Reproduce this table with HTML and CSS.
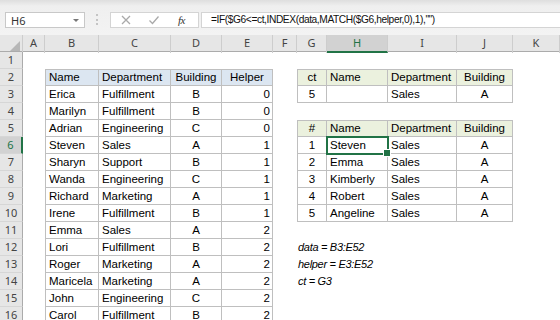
FILE: index.html
```html
<!DOCTYPE html>
<html>
<head>
<meta charset="utf-8">
<link rel="stylesheet" href="styles.css">
</head>
<body>
<div class="fbar">
  <div class="namebox"><span class="nb-text">H6</span><span class="nb-arrow"></span></div>
  <span class="grip"></span>
  <div class="btns">
    <svg class="ico" width="12" height="12" viewBox="0 0 12 12"><path d="M2 2 L10 10 M10 2 L2 10" stroke="#a9a9a9" stroke-width="1.3" fill="none"/></svg>
    <svg class="ico" width="12" height="12" viewBox="0 0 12 12"><path d="M1.5 6.5 L4.5 9.5 L10.5 2.5" stroke="#a9a9a9" stroke-width="1.3" fill="none"/></svg>
    <span class="fx">fx</span>
  </div>
  <div class="formula">=IF($G6&lt;=ct,INDEX(data,MATCH($G6,helper,0),1),"")</div>
</div>
<div class="sheet">
  <div class="r hdr">
    <span class="corner"><i class="tri"></i></span>
    <span class="ch">A</span><span class="ch">B</span><span class="ch">C</span><span class="ch">D</span><span class="ch">E</span><span class="ch">F</span><span class="ch">G</span><span class="ch on">H</span><span class="ch">I</span><span class="ch">J</span><span class="ch">K</span>
  </div>
  <div class="r"><span class="rh">1</span><span></span><span></span><span></span><span></span><span></span><span></span><span></span><span></span><span></span><span></span><span></span></div>
  <div class="r"><span class="rh">2</span><span></span><span class="t tl tt hb">Name</span><span class="t tt hb">Department</span><span class="t tt hb ctr">Building</span><span class="t tt hb ctr">Helper</span><span></span><span class="t tl tt hg ctr">ct</span><span class="t tt hg">Name</span><span class="t tt hg">Department</span><span class="t tt hg ctr">Building</span><span></span></div>
  <div class="r"><span class="rh">3</span><span></span><span class="t tl">Erica</span><span class="t">Fulfillment</span><span class="t ctr">B</span><span class="t rt">0</span><span></span><span class="t tl ctr">5</span><span class="t"></span><span class="t">Sales</span><span class="t ctr">A</span><span></span></div>
  <div class="r"><span class="rh">4</span><span></span><span class="t tl">Marilyn</span><span class="t">Fulfillment</span><span class="t ctr">B</span><span class="t rt">0</span><span></span><span></span><span></span><span></span><span></span><span></span></div>
  <div class="r"><span class="rh">5</span><span></span><span class="t tl">Adrian</span><span class="t">Engineering</span><span class="t ctr">C</span><span class="t rt">0</span><span></span><span class="t tl tt hg ctr">#</span><span class="t tt hg">Name</span><span class="t tt hg">Department</span><span class="t tt hg ctr">Building</span><span></span></div>
  <div class="r"><span class="rh on">6</span><span></span><span class="t tl">Steven</span><span class="t">Sales</span><span class="t ctr">A</span><span class="t rt">1</span><span></span><span class="t tl ctr">1</span><span class="t sel">Steven</span><span class="t">Sales</span><span class="t ctr">A</span><span></span></div>
  <div class="r"><span class="rh">7</span><span></span><span class="t tl">Sharyn</span><span class="t">Support</span><span class="t ctr">B</span><span class="t rt">1</span><span></span><span class="t tl ctr">2</span><span class="t">Emma</span><span class="t">Sales</span><span class="t ctr">A</span><span></span></div>
  <div class="r"><span class="rh">8</span><span></span><span class="t tl">Wanda</span><span class="t">Engineering</span><span class="t ctr">C</span><span class="t rt">1</span><span></span><span class="t tl ctr">3</span><span class="t">Kimberly</span><span class="t">Sales</span><span class="t ctr">A</span><span></span></div>
  <div class="r"><span class="rh">9</span><span></span><span class="t tl">Richard</span><span class="t">Marketing</span><span class="t ctr">A</span><span class="t rt">1</span><span></span><span class="t tl ctr">4</span><span class="t">Robert</span><span class="t">Sales</span><span class="t ctr">A</span><span></span></div>
  <div class="r"><span class="rh">10</span><span></span><span class="t tl">Irene</span><span class="t">Fulfillment</span><span class="t ctr">B</span><span class="t rt">1</span><span></span><span class="t tl ctr">5</span><span class="t">Angeline</span><span class="t">Sales</span><span class="t ctr">A</span><span></span></div>
  <div class="r"><span class="rh">11</span><span></span><span class="t tl">Emma</span><span class="t">Sales</span><span class="t ctr">A</span><span class="t rt">2</span><span></span><span></span><span></span><span></span><span></span><span></span></div>
  <div class="r"><span class="rh">12</span><span></span><span class="t tl">Lori</span><span class="t">Fulfillment</span><span class="t ctr">B</span><span class="t rt">2</span><span></span><span class="note">data = B3:E52</span><span></span><span></span><span></span><span></span></div>
  <div class="r"><span class="rh">13</span><span></span><span class="t tl">Roger</span><span class="t">Marketing</span><span class="t ctr">A</span><span class="t rt">2</span><span></span><span class="note">helper = E3:E52</span><span></span><span></span><span></span><span></span></div>
  <div class="r"><span class="rh">14</span><span></span><span class="t tl">Maricela</span><span class="t">Marketing</span><span class="t ctr">A</span><span class="t rt">2</span><span></span><span class="note">ct = G3</span><span></span><span></span><span></span><span></span></div>
  <div class="r"><span class="rh">15</span><span></span><span class="t tl">John</span><span class="t">Engineering</span><span class="t ctr">C</span><span class="t rt">2</span><span></span><span></span><span></span><span></span><span></span><span></span></div>
  <div class="r"><span class="rh">16</span><span></span><span class="t tl">Carol</span><span class="t">Fulfillment</span><span class="t ctr">B</span><span class="t rt">2</span><span></span><span></span><span></span><span></span><span></span><span></span></div>
</div>
</body>
</html>
```
FILE: styles.css
```css
* { box-sizing: border-box; margin: 0; padding: 0; }
html, body { width: 560px; height: 320px; overflow: hidden; }
body { background: #fff; font-family: "Liberation Sans", Arial, sans-serif; color: #000; }

.fbar {
  height: 35px;
  background: linear-gradient(#dedede 0, #efefef 6px, #f3f3f3 100%);
  display: flex;
  align-items: flex-start;
  padding: 12px 0 0 5px;
}
.namebox {
  width: 80px; height: 16px;
  background: #fff; border: 1px solid #c8c8c8;
  display: flex; align-items: center; justify-content: space-between;
  padding: 0 5px 0 5px;
  font: 11px "Noto Sans", sans-serif; color: #333;
}
.nb-arrow {
  width: 0; height: 0;
  border-left: 3px solid transparent; border-right: 3px solid transparent;
  border-top: 3px solid #777;
}
.grip {
  margin: 2px 0 0 11px;
  width: 2px; height: 11px;
  border-left: 2px dotted #c4c4c4;
}
.btns {
  margin-left: 12px;
  width: 89px; height: 16px;
  background: #fff; border: 1px solid #d4d4d4;
  display: flex; align-items: center;
  padding-left: 9px;
}
.btns .ico { margin-right: 16px; }
.btns .ico + .ico { margin-right: 18px; }
.fx { font: italic 11px "Liberation Serif", serif; color: #333; letter-spacing: -0.5px; }
.formula {
  margin-left: 2px;
  flex: 1; height: 16px;
  background: #fff; border: 1px solid #d4d4d4; border-right: none;
  padding-left: 9px;
  font: 10.2px "Liberation Sans", Arial, sans-serif; line-height: 14px; color: #111;
  letter-spacing: -0.4px;
  white-space: nowrap; overflow: hidden;
}

.r {
  display: grid;
  grid-template-columns: 23px 22px 54px 72px 51px 51px 24px 30px 61px 69px 56px 47px;
  height: 17px;
  font-size: 11.5px;
  line-height: 16px;
}
.r > span { padding: 0 3px; white-space: nowrap; }
.hdr { background: #e6e6e6; border-bottom: 1px solid #ababab; }
.hdr > span { line-height: 16px; }
.ch {
  text-align: center;
  font: 11px "Noto Sans", sans-serif; line-height: 16px; color: #444;
  border-right: 1px solid #cdcdcd;
}
.ch.on { background: #d2d2d2; color: #217346; border-bottom: 2px solid #217346; }
.corner {
  border-right: 1px solid #cdcdcd;
  display: flex; justify-content: flex-end; align-items: flex-end;
  padding: 0 2px 2px 0 !important;
}
.tri {
  width: 0; height: 0;
  border-left: 10px solid transparent;
  border-bottom: 10px solid #b7b7b7;
}
.rh {
  background: #e6e6e6;
  border-right: 1px solid #ababab;
  border-bottom: 1px solid #d6d6d6;
  text-align: center;
  font: 11px "Noto Sans", sans-serif; line-height: 16px; color: #444;
}
.rh.on { background: #d2d2d2; color: #217346; border-right: 2px solid #217346; }

.t { border-right: 1px solid #bfbfbf; border-bottom: 1px solid #bfbfbf; }
.tl { border-left: 1px solid #bfbfbf; }
.tt { border-top: 1px solid #bfbfbf; line-height: 14px; }
.hb { background: #dce6f1; }
.hg { background: #ebf1de; }
.ctr { text-align: center; }
.rt { text-align: right; padding-right: 2px !important; }
.note { font-style: italic; font-size: 11px; letter-spacing: -0.3px; overflow: visible; padding-left: 1px !important; }

.sel { position: relative; }
.sel::after {
  content: "";
  position: absolute; left: -1px; top: -1px; right: -2px; bottom: -2px;
  border: 2px solid #217346;
}
.sel::before {
  content: "";
  position: absolute; right: -4px; bottom: -4px;
  width: 6px; height: 6px;
  background: #217346; border: 1px solid #fff;
  z-index: 2;
}
```
